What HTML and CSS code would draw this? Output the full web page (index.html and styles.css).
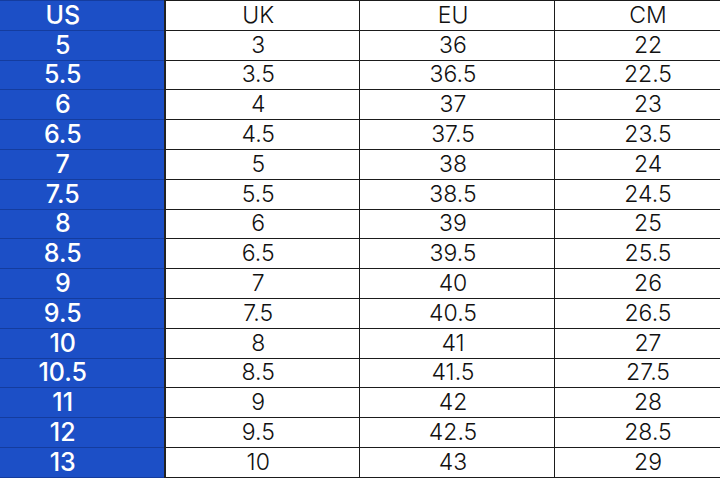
FILE: index.html
```html
<!DOCTYPE html>
<html>
<head>
<meta charset="utf-8">
<link rel="stylesheet" href="styles.css">
</head>
<body>
<div class="frame">
<table class="sizes">
<colgroup><col class="c-us"><col class="c-uk"><col class="c-eu"><col class="c-cm"></colgroup>
<thead>
<tr><th class="us">US</th><th>UK</th><th>EU</th><th>CM</th></tr>
</thead>
<tbody>
<tr><td class="us">5</td><td>3</td><td>36</td><td>22</td></tr>
<tr><td class="us">5.5</td><td>3.5</td><td>36.5</td><td>22.5</td></tr>
<tr><td class="us">6</td><td>4</td><td>37</td><td>23</td></tr>
<tr><td class="us">6.5</td><td>4.5</td><td>37.5</td><td>23.5</td></tr>
<tr><td class="us">7</td><td>5</td><td>38</td><td>24</td></tr>
<tr><td class="us">7.5</td><td>5.5</td><td>38.5</td><td>24.5</td></tr>
<tr><td class="us">8</td><td>6</td><td>39</td><td>25</td></tr>
<tr><td class="us">8.5</td><td>6.5</td><td>39.5</td><td>25.5</td></tr>
<tr><td class="us">9</td><td>7</td><td>40</td><td>26</td></tr>
<tr><td class="us">9.5</td><td>7.5</td><td>40.5</td><td>26.5</td></tr>
<tr><td class="us">10</td><td>8</td><td>41</td><td>27</td></tr>
<tr><td class="us">10.5</td><td>8.5</td><td>41.5</td><td>27.5</td></tr>
<tr><td class="us">11</td><td>9</td><td>42</td><td>28</td></tr>
<tr><td class="us">12</td><td>9.5</td><td>42.5</td><td>28.5</td></tr>
<tr><td class="us">13</td><td>10</td><td>43</td><td>29</td></tr>
</tbody>
</table>
</div>
</body>
</html>
```
FILE: styles.css
```css
html, body {
  margin: 0;
  padding: 0;
  background: #ffffff;
}
.frame {
  width: 720px;
  height: 480px;
  overflow: hidden;
}
.sizes {
  margin-left: -31px;
  border-collapse: collapse;
  table-layout: fixed;
  width: 780px;
  font-family: "Inter", "Lato", sans-serif;
}
.c-us { width: 195px; }
.c-uk { width: 195px; }
.c-eu { width: 195px; }
.c-cm { width: 195px; }
.sizes th, .sizes td {
  height: 29.8px;
  padding: 0 8px 0 0;
  box-sizing: border-box;
  border: 1px solid #1b1b1b;
  text-align: center;
  vertical-align: middle;
  line-height: 1;
  font-size: 23px;
  font-weight: 300;
  color: #111111;
}
.sizes th.us, .sizes td.us {
  background: #1c4fc6;
  color: #ffffff;
  font-size: 25px;
  font-weight: 500;
  border-top-color: #143c9e;
  border-bottom-color: #143c9e;
  border-right: 2px solid #222;
}
```
